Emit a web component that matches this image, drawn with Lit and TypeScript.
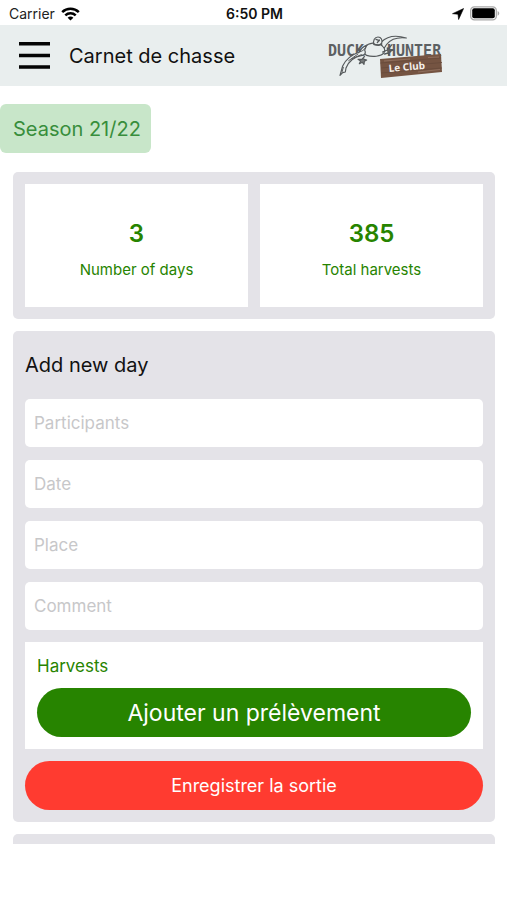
import { LitElement, html, css } from "lit";
import { customElement } from "lit/decorators.js";

@customElement("status-bar")
class StatusBar extends LitElement {
  static styles = css`
    :host {
      display: grid;
      grid-template-columns: 1fr auto 1fr;
      align-items: center;
      height: 25px;
      padding: 2px 7px 0 9px;
      box-sizing: border-box;
      font-size: 14px;
      line-height: 20px;
      color: #222;
    }
    .left,
    .right {
      display: flex;
      align-items: center;
      gap: 6px;
    }
    .right {
      justify-content: flex-end;
    }
    .time {
      font-weight: 600;
      color: #111;
    }
    svg {
      display: block;
    }
  `;
  render() {
    return html`
      <div class="left">
        <span>Carrier</span>
        <svg width="19" height="14" viewBox="0 0 19 14" fill="none" stroke="#000" stroke-width="2.5" aria-hidden="true">
          <path d="M1.2 5.1C5.8.6 13.2.6 17.8 5.1" />
          <path d="M4.3 8.3c2.9-2.8 7.5-2.8 10.4 0" />
          <path d="M9.5 13.6 6.6 10.7c1.6-1.5 4.2-1.5 5.8 0z" fill="#000" stroke="none" />
        </svg>
      </div>
      <span class="time">6:50 PM</span>
      <div class="right">
        <svg width="12" height="12" viewBox="0 0 12 12" aria-hidden="true">
          <path d="M11.6.5 6.6 11.5 6 6.2.5 5.7z" fill="#000" stroke="#000" stroke-width=".6" stroke-linejoin="round" />
        </svg>
        <svg width="30" height="15" viewBox="0 0 30 15" aria-hidden="true">
          <rect x=".7" y=".8" width="25.6" height="13" rx="3.6" fill="#fff" stroke="#a9a9a9" stroke-width="1.3" />
          <rect x="2.2" y="2.3" width="22.6" height="10" rx="2" fill="#000" />
          <path d="M27.6 5v4.800c2.200-.9 2.200-3.900 0-4.800z" fill="#a9a9a9" />
        </svg>
      </div>
    `;
  }
}

@customElement("club-logo")
class ClubLogo extends LitElement {
  static styles = css`
    :host {
      display: block;
    }
    svg {
      display: block;
    }
    .brand {
      font: bold 15px "DejaVu Sans Mono", monospace;
      fill: #5c6062;
    }
    .club {
      font: bold 10px "Noto Sans", sans-serif;
      fill: #f4efea;
    }
  `;
  render() {
    return html`
      <svg width="130" height="55" viewBox="0 0 130 55" role="img" aria-label="Duck Hunter Le Club">
        <text class="brand" x="8" y="28">DUCK</text>
        <text class="brand" x="67" y="28">HUNTER</text>
        <g transform="scale(.33333)" fill="#e9eeee" stroke="#55595b" stroke-width="3.500" stroke-linejoin="round" stroke-linecap="round">
          <path d="M184 42c16-16 42-22 75-12-26-3-46 3-58 18-6 8-8 14-14 18z" />
          <path d="M136 56c10-12 34-14 46-6 10 8 16 14 10 24-8 12-36 14-52 8-10-4-14-14-4-26z" />
          <path d="M162 50c-4-12 2-23 12-23s14 9 11 19l-8 6z" />
          <path d="M160 47c6 4 14 5 22 3M168 34l10 4M172 44l6-8" fill="none" stroke-width="4" />
          <path d="M140 52c-12 4-18 12-22 20-22 8-42 24-50 42l-8 28 8-8 8-2 2-12c8-20 26-34 48-38 10-2 12-8 8-16z" />
          <path d="M118 72c8-2 14-6 18-12M86 98l28-20M70 118l-4 14M96 92l28-12" fill="none" stroke-width="3" />
          <path d="M188 72l14-6 14-16M194 78l14-4 8-8M202 60l4 20" fill="none" stroke-width="4" />
          <path d="M134 84l-8 10-12 0 8 5-4 8 9-4 5 6 1-9 7-4-8-2" fill="#777b7c" />
        </g>
        <path d="M60 31 121 26 122 44 61 50z" fill="#755442" />
        <path d="M60.500 35 121 30M61 40 122 34.500M61 45 122 40" stroke="#694b3b" stroke-width=".9" />
        <path d="M64 33 90 31M98 44 120 41.500M108 29.500 119 29" stroke="#957563" stroke-width=".8" />
        <text class="club" x="69" y="44" transform="rotate(-5 69 44)">Le Club</text>
      </svg>
    `;
  }
}

@customElement("app-root")
class AppRoot extends LitElement {
  static styles = css`
    :host {
      display: flex;
      flex-direction: column;
      height: 100vh;
      box-sizing: border-box;
      padding-bottom: 56px;
      background: #fff;
      color: #111;
      font-family: Inter, "Liberation Sans", sans-serif;
    }
    header {
      display: flex;
      align-items: center;
      flex: none;
      height: 61px;
      padding: 0 57px 0 19px;
      background: #e9eeee;
    }
    h1,
    h2,
    h3,
    p {
      margin: 0;
      font-weight: 400;
    }
    h1 {
      margin-left: 19px;
      font-size: 20px;
      line-height: 24px;
    }
    button {
      font: inherit;
      border: 0;
      padding: 0;
      cursor: pointer;
    }
    .menu {
      background: none;
    }
    .menu svg {
      display: block;
    }
    club-logo {
      margin-left: auto;
    }
    main {
      flex: 1;
      min-height: 0;
      overflow: hidden;
      padding-top: 18px;
    }
    .season {
      display: inline-block;
      padding: 2px 10px 0 13px;
      border-radius: 6px;
      background: #c8e6c9;
      color: #388e3c;
      font-size: 20px;
      line-height: 47px;
      vertical-align: top;
    }
    .cards {
      display: flex;
      flex-direction: column;
      gap: 12px;
      padding: 19px 12px 0 13px;
    }
    .card {
      padding: 12px;
      border-radius: 5px;
      background: #e4e3e8;
    }
    .stats {
      display: grid;
      grid-template-columns: 1fr 1fr;
      gap: 12px;
    }
    .stat {
      display: flex;
      flex-direction: column;
      align-items: center;
      gap: 7px;
      padding: 32px 0 25px;
      background: #fff;
      color: #278400;
    }
    .stat strong {
      font-size: 24px;
      line-height: 35px;
      font-weight: 600;
    }
    .stat span {
      font-size: 15px;
      line-height: 24px;
    }
    form {
      display: flex;
      flex-direction: column;
      gap: 12px;
    }
    h2 {
      padding: 10px 0;
      font-size: 20px;
      line-height: 24px;
    }
    .fields {
      display: flex;
      flex-direction: column;
      gap: 13px;
    }
    input {
      display: block;
      width: 100%;
      height: 48px;
      box-sizing: border-box;
      padding: 0 9px;
      border: 0;
      border-radius: 5px;
      background: #fff;
      color: #111;
      font: inherit;
      font-size: 17px;
    }
    input::placeholder {
      color: #c7c7c9;
      opacity: 1;
    }
    .harvests {
      padding: 12px;
      background: #fff;
    }
    h3 {
      margin-bottom: 10px;
      color: #278400;
      font-size: 17px;
      line-height: 24px;
    }
    .pill {
      display: block;
      width: 100%;
      height: 49px;
      border-radius: 25px;
      color: #fff;
    }
    .add {
      background: #278400;
      font-size: 23px;
    }
    .save {
      background: #ff3b30;
      font-size: 18px;
    }
    .next {
      flex: none;
      height: 120px;
    }
  `;
  render() {
    const fields = ["Participants", "Date", "Place", "Comment"];
    return html`
      <status-bar></status-bar>
      <header>
        <button class="menu" type="button" aria-label="Menu">
          <svg width="31" height="27" viewBox="0 0 31 27" aria-hidden="true">
            <path d="M0 0h31v3.500H0zM0 11.700h31v3.500H0zM0 23.200h31v3.500H0z" fill="#050505" />
          </svg>
        </button>
        <h1>Carnet de chasse</h1>
        <club-logo></club-logo>
      </header>
      <main>
        <p class="season">Season 21/22</p>
        <div class="cards">
          <section class="card stats">
            <div class="stat"><strong>3</strong><span>Number of days</span></div>
            <div class="stat"><strong>385</strong><span>Total harvests</span></div>
          </section>
          <section class="card">
            <form>
              <h2>Add new day</h2>
              <div class="fields">
                ${fields.map((f) => html`<input type="text" placeholder=${f} aria-label=${f} />`)}
              </div>
              <div class="harvests">
                <h3>Harvests</h3>
                <button class="pill add" type="button">Ajouter un prélèvement</button>
              </div>
              <button class="pill save" type="button">Enregistrer la sortie</button>
            </form>
          </section>
          <section class="card next"></section>
        </div>
      </main>
    `;
  }
}
